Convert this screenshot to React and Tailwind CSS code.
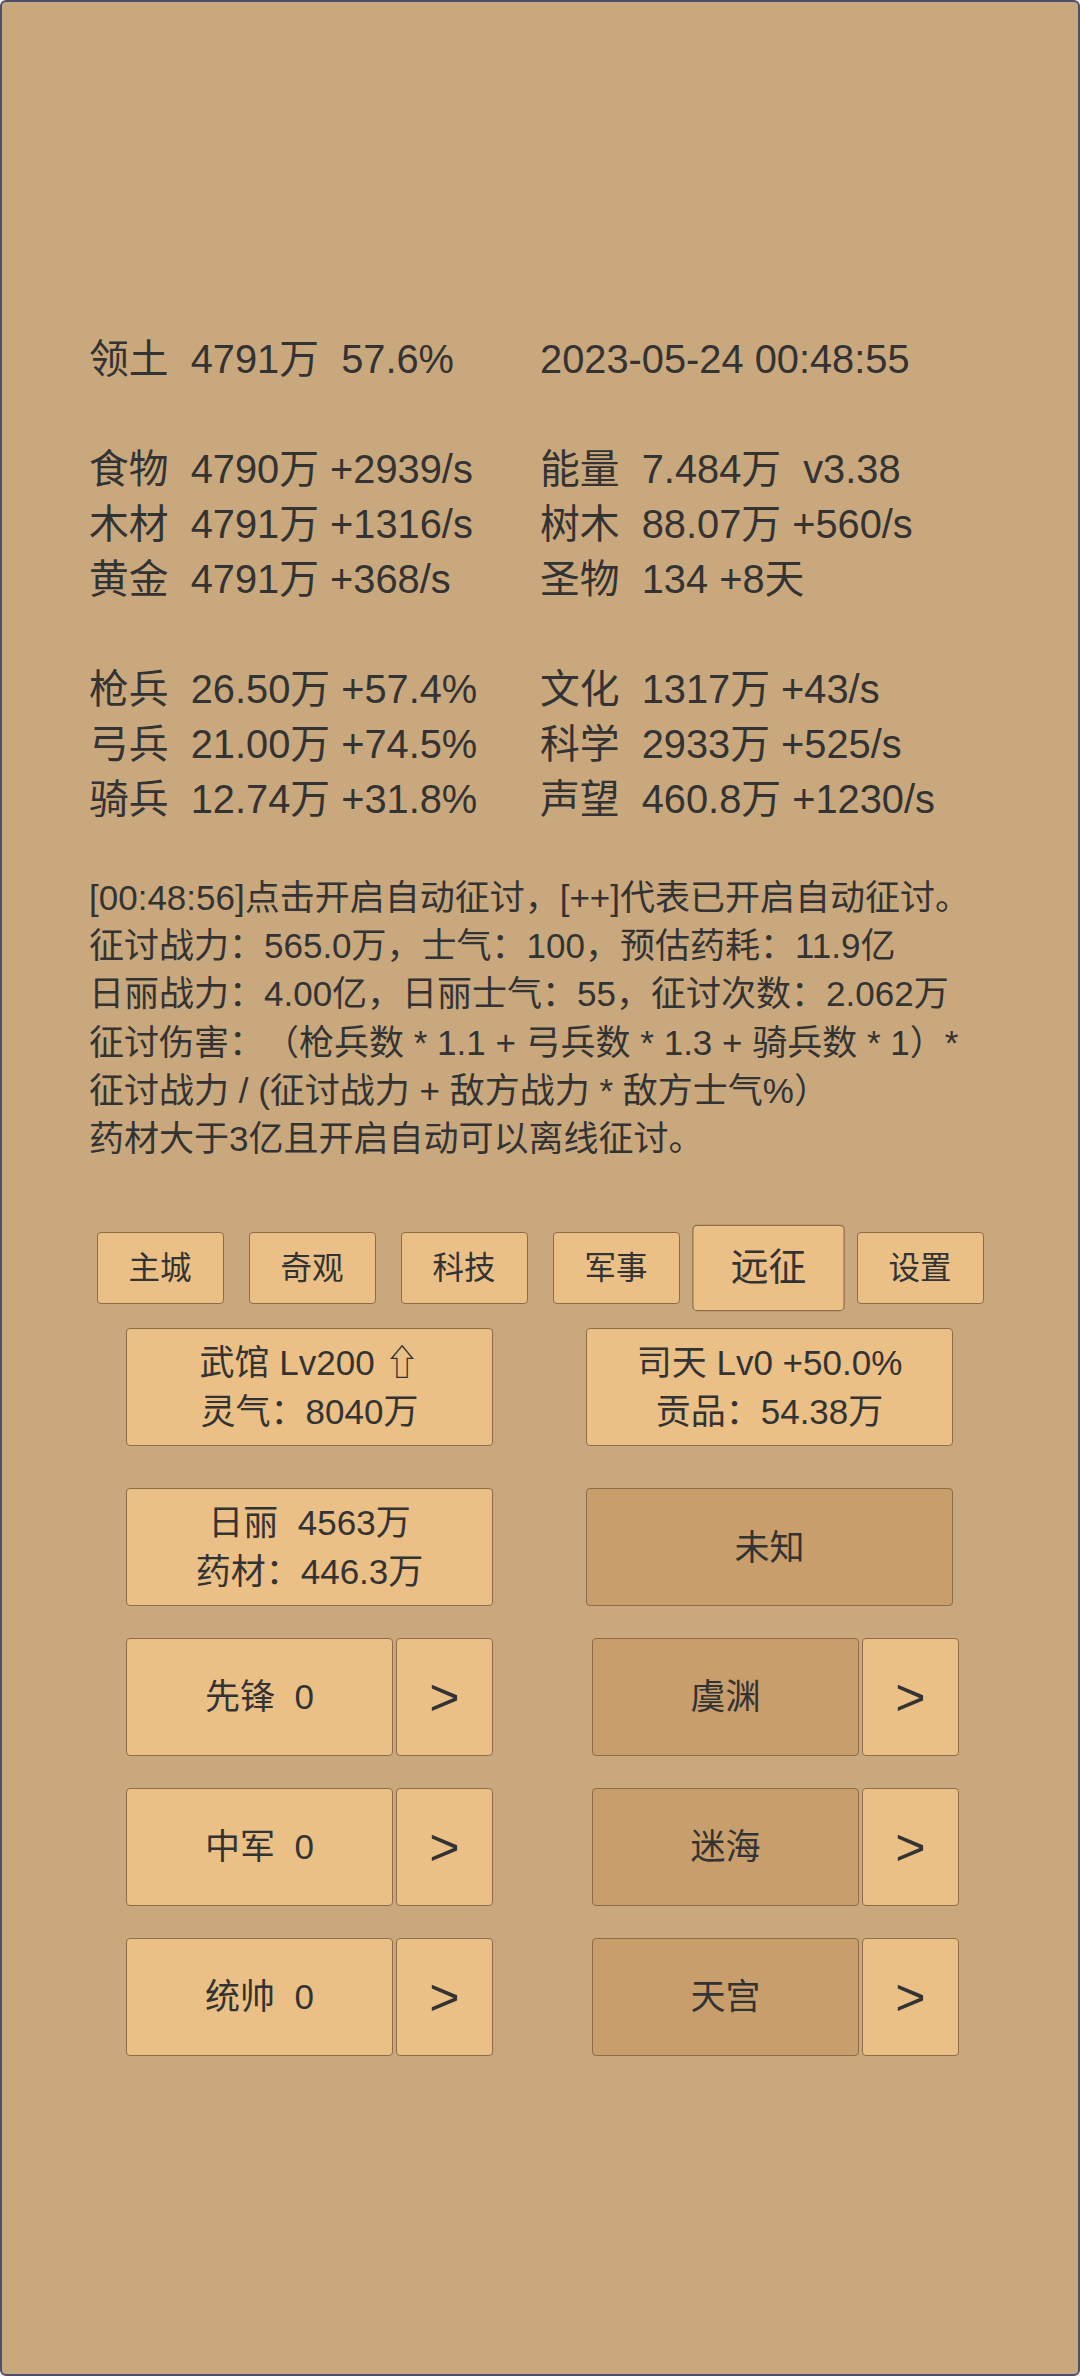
import React from "react";

const font = { fontFamily: '"Liberation Sans", "Noto Sans CJK SC", "DejaVu Sans", sans-serif' };

const statRows = [
  ["领土  4791万  57.6%", "2023-05-24 00:48:55"],
  null,
  ["食物  4790万 +2939/s", "能量  7.484万  v3.38"],
  ["木材  4791万 +1316/s", "树木  88.07万 +560/s"],
  ["黄金  4791万 +368/s", "圣物  134 +8天"],
  null,
  ["枪兵  26.50万 +57.4%", "文化  1317万 +43/s"],
  ["弓兵  21.00万 +74.5%", "科学  2933万 +525/s"],
  ["骑兵  12.74万 +31.8%", "声望  460.8万 +1230/s"],
];

const infoLines = [
  "[00:48:56]点击开启自动征讨，[++]代表已开启自动征讨。",
  "征讨战力：565.0万，士气：100，预估药耗：11.9亿",
  "日丽战力：4.00亿，日丽士气：55，征讨次数：2.062万",
  "征讨伤害：（枪兵数 * 1.1 + 弓兵数 * 1.3 + 骑兵数 * 1）*",
  "征讨战力 / (征讨战力 + 敌方战力 * 敌方士气%）",
  "药材大于3亿且开启自动可以离线征讨。",
];

const tabs = ["主城", "奇观", "科技", "军事", "远征", "设置"];

const squads = [
  ["先锋  0", "虞渊"],
  ["中军  0", "迷海"],
  ["统帅  0", "天宫"],
];

function Card({ dark, children }) {
  return (
    <div
      className={`w-[367px] h-[118px] flex flex-col items-center justify-center rounded-[4px] border border-[#8d6c47] text-[35px] leading-[1.4] whitespace-pre ${
        dark ? "bg-[#c99e6d]" : "bg-[#eac087]"
      }`}
    >
      {children}
    </div>
  );
}

function SquadRow({ label, dark }) {
  return (
    <div className="flex gap-[3px]">
      <div
        className={`w-[267px] h-[118px] flex items-center justify-center rounded-[4px] border border-[#8d6c47] text-[35px] whitespace-pre ${
          dark ? "bg-[#c99e6d]" : "bg-[#eac087]"
        }`}
      >
        {label}
      </div>
      <div className="w-[97px] h-[118px] flex items-center justify-center rounded-[4px] border border-[#8d6c47] bg-[#eac087] text-[52px] leading-none">
        &gt;
      </div>
    </div>
  );
}

export default function App() {
  return (
    <div
      className="h-[2376px] w-[1080px] border-2 border-[#4d4f6b] rounded-[6px] bg-[#c9a87e] text-[#333] overflow-hidden [text-spacing-trim:space-all]"
      style={font}
    >
      {/* stats */}
      <div className="pt-[330px] pl-[87px] text-[39.8px] leading-[55px] whitespace-pre">
        {statRows.map((row, i) =>
          row ? (
            <div key={i} className="grid grid-cols-[451px_1fr]">
              <div>{row[0]}</div>
              <div>{row[1]}</div>
            </div>
          ) : (
            <div key={i} className="h-[55px]" />
          )
        )}
      </div>

      {/* expedition info */}
      <div className="mt-[47px] pl-[87px] text-[35px] leading-[48.2px] whitespace-pre">
        {infoLines.map((line, i) => (
          <div key={i}>{line}</div>
        ))}
      </div>

      {/* tabs */}
      <div className="mt-[69px] flex justify-center gap-[25px]">
        {tabs.map((t) => (
          <div
            key={t}
            className={`w-[127px] h-[72px] flex items-center justify-center rounded-[4px] border border-[#8d6c47] bg-[#eac087] text-[31.5px] ${
              t === "远征" ? "scale-[1.2]" : ""
            }`}
          >
            {t}
          </div>
        ))}
      </div>

      {/* buildings */}
      <div className="mt-[24px] pl-[124px] flex flex-col gap-[42px]">
        <div className="flex gap-[93px]">
          <Card>
            <div>武馆 Lv200 ⇧</div>
            <div>灵气：8040万</div>
          </Card>
          <Card>
            <div>司天 Lv0 +50.0%</div>
            <div>贡品：54.38万</div>
          </Card>
        </div>
        <div className="flex gap-[93px]">
          <Card>
            <div>日丽  4563万</div>
            <div>药材：446.3万</div>
          </Card>
          <Card dark>
            <div>未知</div>
          </Card>
        </div>
      </div>

      {/* squads */}
      <div className="mt-[32px] pl-[124px] flex flex-col gap-[32px]">
        {squads.map(([left, right]) => (
          <div key={left} className="flex gap-[99px]">
            <SquadRow label={left} />
            <SquadRow label={right} dark />
          </div>
        ))}
      </div>
    </div>
  );
}
